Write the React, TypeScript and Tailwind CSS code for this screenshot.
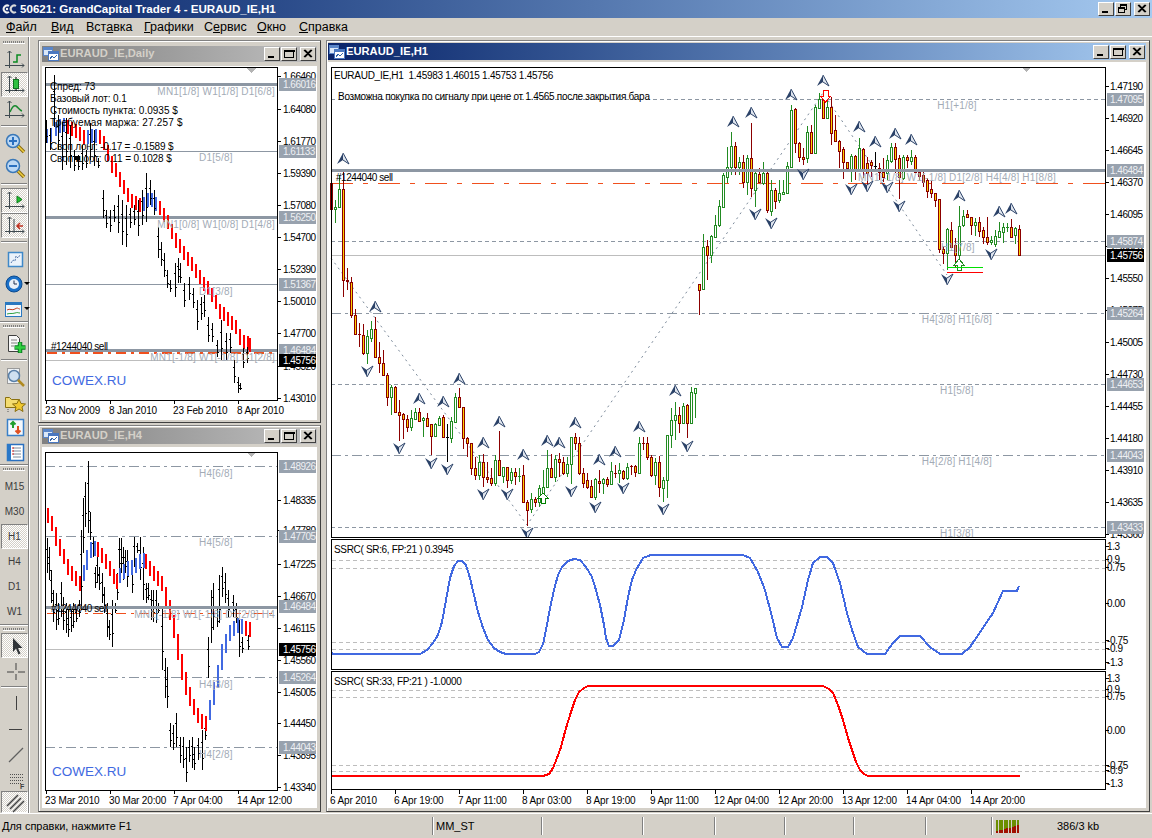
import type { ReactNode } from 'react';

const FONT = '"Liberation Sans", Arial, sans-serif';
const LEVEL = '#8d97a3';
const LABEL = '#a3abb6';

type Candle = [number, number, number, number, string];

const candles: Candle[] = [
  [183,209,177,213,'r'],[207,209,200,223,'g'],[189,207,175,207,'g'],[189,280,172,297,'r'],[280,281,268,290,'r'],[282,315,277,318,'r'],
  [315,334,309,334,'r'],[334,334,323,347,'r'],[335,353,324,355,'r'],[336,353,330,364,'g'],[329,338,321,342,'g'],[329,357,317,358,'r'],
  [357,363,342,373,'r'],[363,375,350,376,'r'],[375,397,373,406,'r'],[387,397,385,415,'g'],[387,412,386,413,'r'],[412,415,400,441,'r'],
  [414,419,413,439,'r'],[419,427,415,432,'r'],[418,427,410,431,'g'],[412,419,408,420,'g'],[412,421,408,422,'r'],[418,420,417,437,'g'],
  [418,426,413,427,'r'],[424,436,424,455,'r'],[424,436,423,437,'g'],[418,425,416,426,'g'],[417,437,415,438,'r'],[437,437,424,462,'k'],
  [421,438,417,443,'g'],[397,422,393,423,'g'],[397,407,388,408,'r'],[407,438,407,449,'r'],[438,443,437,457,'r'],[443,468,443,475,'r'],
  [468,475,457,480,'r'],[462,475,455,480,'g'],[462,477,454,487,'r'],[477,479,462,483,'r'],[478,483,468,486,'r'],[460,483,455,486,'g'],
  [460,475,431,475,'r'],[467,476,467,483,'g'],[467,480,467,488,'r'],[472,480,468,484,'g'],[472,476,468,485,'r'],[476,476,468,482,'g'],
  [475,502,465,503,'r'],[502,510,500,526,'r'],[499,509,493,513,'g'],[499,502,497,507,'r'],[488,502,485,507,'g'],[487,498,470,504,'g'],
  [468,487,450,488,'g'],[468,477,454,478,'r'],[459,477,455,482,'g'],[459,462,453,477,'r'],[462,473,457,475,'r'],[464,473,457,477,'g'],
  [437,464,437,484,'g'],[437,443,433,450,'r'],[443,473,437,475,'r'],[473,483,468,488,'r'],[480,487,473,489,'r'],[486,497,480,498,'r'],
  [479,497,478,500,'g'],[481,483,470,493,'r'],[479,483,478,494,'g'],[479,484,477,487,'r'],[471,484,462,485,'g'],[473,473,465,478,'r'],
  [470,473,463,483,'g'],[471,478,470,480,'r'],[467,478,463,480,'g'],[466,466,465,475,'r'],[466,472,465,477,'r'],[443,473,437,473,'g'],
  [443,443,437,450,'r'],[443,457,437,460,'r'],[457,475,455,477,'r'],[462,475,458,485,'g'],[462,487,456,497,'r'],[480,488,477,502,'g'],
  [435,480,435,498,'g'],[420,435,408,448,'g'],[415,420,402,440,'g'],[415,423,407,433,'r'],[406,423,403,423,'g'],[405,423,404,438,'r'],
  [392,423,387,423,'g'],[388,393,388,418,'g'],[284,290,284,315,'r'],[247,289,234,290,'g'],[246,255,240,280,'r'],[236,255,235,263,'g'],
  [225,237,215,238,'g'],[206,225,200,227,'g'],[175,207,173,207,'g'],[167,177,147,183,'g'],[146,167,132,175,'g'],[146,167,142,175,'r'],
  [162,167,157,175,'g'],[162,182,155,188,'r'],[158,182,155,195,'g'],[158,188,123,197,'r'],[173,190,170,207,'g'],[174,182,168,183,'r'],
  [173,183,162,185,'g'],[173,210,172,213,'r'],[190,211,180,216,'g'],[190,201,188,209,'r'],[193,200,180,203,'g'],[192,194,180,195,'g'],
  [166,193,162,193,'g'],[110,167,105,168,'g'],[109,143,108,153,'r'],[143,157,142,162,'r'],[157,159,148,165,'r'],[132,158,126,163,'g'],
  [132,153,125,153,'r'],[107,153,105,153,'g'],[99,108,93,108,'g'],[99,118,90,119,'r'],[107,118,97,118,'g'],[107,133,97,145,'r'],
  [130,141,115,142,'r'],[141,151,140,168,'r'],[149,162,147,179,'r'],[162,168,162,170,'r'],[156,169,154,182,'g'],[156,169,155,180,'r'],
  [148,169,138,170,'g'],[149,169,148,178,'r'],[163,173,157,187,'r'],[162,165,160,177,'r'],[166,166,152,170,'k'],[168,172,163,180,'r'],
  [172,177,158,182,'r'],[160,173,155,180,'g'],[147,161,143,163,'g'],[147,159,143,173,'r'],[158,177,155,199,'r'],[157,178,155,180,'g'],
  [157,160,155,168,'r'],[157,161,150,165,'g'],[157,172,155,173,'r'],[172,176,170,180,'r'],[175,182,170,187,'r'],[180,191,178,198,'r'],
  [189,193,180,198,'r'],[193,200,193,207,'r'],[199,249,199,253,'r'],[249,253,246,264,'r'],[229,253,228,270,'g'],[230,247,222,247,'r'],
  [245,255,238,267,'r'],[226,255,206,260,'g'],[216,225,210,227,'g'],[214,217,210,218,'r'],[217,225,217,235,'r'],[222,225,218,236,'g'],
  [222,231,217,237,'r'],[230,237,227,244,'r'],[237,242,217,245,'r'],[240,242,236,245,'g'],[236,244,230,247,'g'],[231,237,222,237,'g'],
  [227,232,223,243,'g'],[227,227,223,232,'g'],[227,237,219,238,'r'],[228,235,227,244,'g'],[229,255,225,255,'r'],
];

const upMarks = [[343,159],[733,122],[751,113],[791,95],[823,81],[859,127],[875,142],[895,134],[911,140],[959,196],[999,212],[1011,209],[375,307],[459,379],[419,399],[443,402],[499,422],[483,443],[523,455],[547,441],[559,443],[575,423],[599,460],[615,452],[639,427],[675,391]];
const downMarks = [[367,371],[399,448],[431,463],[447,469],[483,494],[507,494],[527,533],[571,491],[595,507],[623,488],[663,509],[687,446],[755,214],[771,223],[803,174],[851,189],[867,186],[887,187],[899,206],[947,279],[991,254]];

const blueLine = '331,653 334,654 420,654 427,650 433,643 438,635 442,622 446,600 450,578 454,566 458,561 462,561 466,565 470,578 474,595 478,612 483,628 488,640 494,648 500,652 506,654 535,654 539,652 543,644 546,630 550,608 554,590 558,575 562,567 568,561 574,559 580,560 586,567 592,577 596,590 600,605 604,625 606,638 609,646 613,646 619,640 624,620 628,597 632,580 636,570 643,558 651,555 743,555 750,558 758,572 765,590 772,617 777,638 782,647 788,647 793,638 802,607 808,580 813,563 820,557 827,557 833,563 840,583 847,613 852,630 858,647 867,654 885,654 893,643 900,636 920,636 930,647 940,654 962,654 970,647 993,613 1003,591 1017,591 1019,586';
const redLine = '331,776 543,776 549,774 553,768 557,758 561,747 566,728 571,712 575,700 579,692 584,688 588,686 823,686 829,689 833,693 838,705 843,720 848,738 852,750 856,762 860,770 864,774 868,776 1020,776';

const dailyBand: [number, number][] = [[46,136],[50,135],[55,129],[59,126],[63,125],[67,127],[71,129],[75,131],[79,134],[83,137],[87,137],[91,136],[95,136],[99,137],[103,143],[107,153],[111,164],[115,170],[119,179],[123,187],[127,195],[131,201],[135,203],[139,205],[143,204],[147,200],[151,200],[155,204],[159,208],[163,215],[167,222],[171,231],[175,240],[179,246],[183,253],[187,259],[191,264],[195,271],[199,277],[203,284],[207,288],[211,295],[215,302],[219,311],[223,314],[227,319],[231,323],[235,327],[239,337],[243,342],[247,343],[249,345]];
const dailyBlue: [number, number][] = [[46,66],[87,97],[143,157]];

const dailyBars: [number, number, number][] = [[46,120,143],[50,128,150],[54,75,127],[58,115,150],[62,122,170],[66,118,165],[70,125,168],[74,150,171],[78,155,170],[82,145,170],[86,150,168],[90,123,160],[94,130,166],[98,158,168],[103,190,218],[106,210,228],[110,210,232],[114,205,222],[118,195,233],[122,200,245],[126,205,247],[130,208,228],[134,205,225],[138,200,236],[142,190,225],[146,173,222],[150,180,205],[154,190,215],[158,227,258],[161,242,266],[164,253,277],[167,270,288],[170,280,292],[175,263,297],[178,258,283],[180,263,283],[184,283,307],[189,277,300],[193,288,308],[197,300,330],[201,297,320],[204,295,317],[208,317,342],[212,323,342],[217,340,357],[221,320,360],[226,333,360],[230,333,353],[234,360,383],[238,377,393],[240,383,390],[243,348,368],[247,347,363]];

// zoom coordinates of the H4 pane: x = X / 3, y = 440 + Y / 3
const h4BandRaw: [number, number][] = [[140,225],[152,250],[164,290],[176,322],[188,350],[200,380],[212,400],[224,415],[236,430],[248,400],[258,360],[270,330],[282,325],[292,328],[304,345],[316,365],[328,385],[340,410],[348,425],[356,405],[368,395],[380,385],[392,382],[404,375],[416,365],[428,360],[436,365],[448,385],[460,400],[472,415],[484,430],[496,470],[508,510],[520,560],[532,620],[544,680],[556,730],[568,770],[580,800],[592,825],[604,845],[616,850],[628,810],[640,760],[652,710],[664,650],[676,610],[688,580],[700,565],[712,555],[724,560],[736,565],[746,568]];
const h4Band = h4BandRaw.map(([x, y]): [number, number] => [Math.round(x / 3), 440 + y / 3]);
const h4Blue: [number, number][] = [[82,95],[118,143],[209,242]];

const h4BarsRaw: [number, number, number][] = [[140,295,400],[146,320,420],[152,390,490],[160,450,545],[167,460,570],[175,490,555],[182,425,530],[190,470,570],[197,490,580],[205,510,590],[213,510,575],[220,490,565],[228,500,545],[236,480,530],[242,270,510],[248,175,340],[256,125,260],[265,62,280],[271,215,300],[278,290,350],[284,380,445],[290,350,430],[298,380,450],[305,400,490],[313,440,520],[320,490,590],[326,540,600],[335,480,620],[344,490,520],[350,400,480],[356,295,400],[362,295,400],[368,320,420],[375,330,400],[382,330,440],[395,370,460],[403,290,380],[410,310,340],[420,290,420],[430,320,480],[437,430,490],[445,430,480],[452,450,540],[460,450,545],[468,450,550],[475,490,520],[487,500,690],[494,655,775],[500,680,805],[510,850,920],[520,855,930],[528,820,920],[540,890,970],[548,890,985],[558,920,1025],[568,900,965],[575,890,985],[583,920,990],[595,895,960],[607,870,990],[616,850,900],[625,590,715],[633,450,610],[640,430,570],[650,500,560],[656,405,550],[667,380,470],[675,400,490],[685,450,530],[698,465,530],[708,490,550],[716,540,650],[725,590,640],[745,585,630]];
const h4Bars = h4BarsRaw.map(([x, t, b]): [number, number, number] => [Math.round(x / 3), 440 + Math.round(t / 3), 440 + Math.round(b / 3)]);

function T({ x, y, children, fill = '#000', anchor, size = 10, ls = -0.27 }: { x: number; y: number; children: ReactNode; fill?: string; anchor?: 'end' | 'middle'; size?: number; ls?: number }) {
  return (
    <text x={x} y={y + 4} fill={fill} textAnchor={anchor} fontSize={size} letterSpacing={ls} fontFamily={FONT} shapeRendering="auto">
      {children}
    </text>
  );
}

function G({ x, y, anchor, children }: { x: number; y: number; anchor?: 'end' | 'middle'; children: ReactNode }) {
  return <T x={x} y={y} anchor={anchor} fill={LABEL} ls={0.2}>{children}</T>;
}

function Level({ x1, x2, y, dash, color = LEVEL, w = 1 }: { x1: number; x2: number; y: number; dash?: string; color?: string; w?: number }) {
  return <line x1={x1} x2={x2} y1={y} y2={y} stroke={color} strokeWidth={w} strokeDasharray={dash} />;
}

function PriceAxis({ x, dx = 6, ticks, tags, bid }: { x: number; dx?: number; ticks: [string, number][]; tags: [string, number][]; bid: [string, number] }) {
  return (
    <>
      {ticks.map(([t, y]) => (
        <g key={t}>
          <line x1={x} x2={x + 4} y1={y} y2={y} stroke="#000" />
          <T x={x + dx} y={y} ls={-0.5}>{t}</T>
        </g>
      ))}
      {tags.map(([t, y]) => (
        <g key={t}>
          <rect x={x + 2} y={y - 6} width={37} height={13} fill="#98a2ae" />
          <T x={x + dx} y={y} fill="#eef0f3" ls={-0.5}>{t}</T>
        </g>
      ))}
      <rect x={x + 2} y={bid[1] - 6} width={37} height={13} fill="#000" />
      <T x={x + dx} y={bid[1]} fill="#fff" ls={-0.5}>{bid[0]}</T>
    </>
  );
}

function TimeAxis({ x, y, labels }: { x: number; y: number; labels: string[] }) {
  return (
    <>
      {labels.map((t, i) => (
        <g key={t}>
          <line x1={x + i * 64} x2={x + i * 64} y1={y} y2={y + 4} stroke="#000" />
          <T x={x + i * 64 - 1} y={y + 10} ls={-0.15}>{t}</T>
        </g>
      ))}
    </>
  );
}

function Band({ data, blue, min }: { data: [number, number][]; blue: [number, number][]; min: number }) {
  return (
    <>
      {data.map(([x, y], i) => {
        const prev = data[Math.max(i - 1, 0)][1];
        const h = Math.max(min, Math.abs(y - prev) + 6);
        const isBlue = blue.some(([a, b]) => x >= a && x <= b);
        return <rect key={x} x={x} y={y - h / 2} width={2} height={h} fill={isBlue ? '#4169e1' : '#ff0000'} />;
      })}
    </>
  );
}

// open tick to the left, close tick to the right of every bar
function Bars({ data }: { data: [number, number, number][] }) {
  return (
    <>
      {data.map(([x, t, b]) => (
        <g key={`${x}-${t}`}>
          <rect x={x} y={t} width={1} height={b - t} fill="#000" />
          <rect x={x - 1} y={t + Math.round((b - t) * 0.3)} width={1} height={1} fill="#000" />
          <rect x={x + 1} y={t + Math.round((b - t) * 0.7)} width={1} height={1} fill="#000" />
        </g>
      ))}
    </>
  );
}

function Cowex({ y }: { y: number }) {
  return <T x={52} y={y} fill="#4169e1" size={13.5} ls={0}>COWEX.RU</T>;
}

function Marker({ x, y }: { x: number; y: number }) {
  return <polygon points={`${x - 5},${y} ${x + 5},${y} ${x},${y + 5}`} fill="#b4b4b4" />;
}

function Fractal({ x, y, up }: { x: number; y: number; up: boolean }) {
  const s = up ? 1 : -1;
  return (
    <g shapeRendering="auto">
      <polygon points={`${x},${y - 6 * s} ${x - 6},${y + 5 * s} ${x},${y + 1 * s}`} fill="#2b4268" />
      <polyline points={`${x},${y - 6 * s} ${x + 6},${y + 5 * s} ${x},${y + 1 * s}`} fill="#dfe5ee" stroke="#2b4268" strokeWidth={1} />
    </g>
  );
}

function DailyChart() {
  const ticks: [string, number][] = [['1.66460',76],['1.64080',109],['1.61770',141],['1.59390',173],['1.57080',205],['1.54700',237],['1.52390',269],['1.50010',301],['1.47700',333],['1.45320',366],['1.43010',398]];
  const tags: [string, number][] = [['1.66016',84],['1.61133',151],['1.56250',217],['1.51367',284],['1.46484',350]];
  return (
    <svg width={275} height={354} viewBox="42 66 275 354" shapeRendering="crispEdges" className="block">
      <Level x1={45} x2={277} y={84.5} w={3} />
      <Level x1={45} x2={277} y={151.5} />
      <Level x1={45} x2={277} y={217.5} w={3} />
      <Level x1={45} x2={277} y={284.5} />
      <Level x1={45} x2={277} y={360.5} color="#bdbdbd" />
      <Level x1={47} x2={277} y={352.5} w={2} color="#f0501e" dash="10 5 3 5" />
      <Level x1={45} x2={277} y={350.5} w={3} />
      <Band data={dailyBand} blue={dailyBlue} min={14} />
      <Bars data={dailyBars} />
      <rect x={74} y={156} width={6} height={4} fill="#000" />
      <G x={275} y={91} anchor="end">MN1[1/8] W1[1/8] D1[6/8]</G>
      <G x={199} y={157}>D1[5/8]</G>
      <G x={275} y={224} anchor="end">MN1[0/8] W1[0/8] D1[4/8]</G>
      <G x={199} y={291}>D1[3/8]</G>
      <G x={275} y={357} anchor="end">MN1[-1/8] W1[-1/8] D1[2/8]</G>
      <T x={51} y={346} ls={-0.45}>#1244040 sell</T>
      <T x={50} y={86} ls={-0.1}>Спред: 73</T>
      <T x={50} y={98} ls={-0.1}>Базовый лот: 0.1</T>
      <T x={50} y={110} ls={0}>Стоимость пункта: 0.0935 $</T>
      <T x={50} y={122} ls={0.2}>Требуемая маржа: 27.257 $</T>
      <T x={50} y={146} ls={-0.2}>Своп лонг: -0.17 = -0.1589 $</T>
      <T x={50} y={158} ls={-0.1}>Своп шорт: 0.11 = 0.1028 $</T>
      <Cowex y={381} />
      <Marker x={251} y={68} />
      <rect x={45.5} y={67.5} width={232} height={333} fill="none" stroke="#000" />
      <PriceAxis x={277} ticks={ticks} tags={tags} bid={['1.45756', 360]} />
      <TimeAxis x={46} y={400} labels={['23 Nov 2009', '8 Jan 2010', '23 Feb 2010', '8 Apr 2010']} />
    </svg>
  );
}

function H4Chart() {
  const ticks: [string, number][] = [['1.48335',500],['1.47780',530],['1.47225',564],['1.46670',596],['1.46115',628],['1.45560',660],['1.45005',692],['1.44450',723],['1.43895',755],['1.43340',787]];
  const tags: [string, number][] = [['1.48926',466],['1.47705',536],['1.46484',606],['1.45264',677],['1.44043',747]];
  const dash = '10 4 3 4';
  return (
    <svg width={275} height={361} viewBox="42 447 275 361" shapeRendering="crispEdges" className="block">
      <Level x1={45} x2={277} y={466.5} dash={dash} />
      <Level x1={45} x2={277} y={536.5} dash={dash} />
      <Level x1={45} x2={277} y={649.5} color="#bdbdbd" />
      <Level x1={45} x2={277} y={677.5} dash={dash} />
      <Level x1={45} x2={277} y={747.5} dash={dash} />
      <Level x1={47} x2={277} y={613.5} color="#f0501e" dash="10 5 3 5" />
      <Bars data={h4Bars} />
      <Band data={h4Band} blue={h4Blue} min={15} />
      <Level x1={45} x2={277} y={607} w={3} />
      <G x={199} y={473}>H4[6/8]</G>
      <G x={199} y={542}>H4[5/8]</G>
      <G x={275} y={614} anchor="end">MN1[-1/8] W1[-1/8] D1[2/8] H4</G>
      <G x={199} y={684}>H4[3/8]</G>
      <G x={199} y={754}>H4[2/8]</G>
      <T x={51} y={608} ls={-0.45}>#1244040 sell</T>
      <Cowex y={772} />
      <Marker x={251} y={452} />
      <rect x={45.5} y={452.5} width={232} height={338} fill="none" stroke="#000" />
      <PriceAxis x={277} ticks={ticks} tags={tags} bid={['1.45756', 649]} />
      <TimeAxis x={46} y={790} labels={['23 Mar 2010', '30 Mar 20:00', '7 Apr 04:00', '14 Apr 12:00']} />
    </svg>
  );
}

function Candles() {
  return (
    <>
      {candles.map(([t, b, wt, wb, c], i) => {
        const x = 331 + i * 4;
        const edge = c === 'r' ? '#8b0000' : c === 'g' ? '#228b22' : '#000';
        return (
          <g key={i}>
            <rect x={x} y={wt} width={1} height={wb - wt} fill={edge} />
            <rect x={x - 1} y={t} width={3} height={Math.max(b - t, 0) + 1} fill={edge} />
            {b - t > 1 && <rect x={x} y={t + 1} width={1} height={b - t - 1} fill={c === 'r' ? '#ffd000' : '#fff'} />}
          </g>
        );
      })}
    </>
  );
}

function MainChart() {
  const ticks: [string, number][] = [['1.47190',86],['1.46920',118],['1.46645',150],['1.46370',182],['1.46095',214],['1.45825',246],['1.45550',278],['1.45275',310],['1.45005',342],['1.44730',374],['1.44455',406],['1.44180',438],['1.43910',470],['1.43635',502],['1.43360',534]];
  const tags: [string, number][] = [['1.47095',99],['1.46484',170],['1.45874',241],['1.45264',313],['1.44653',384],['1.44043',455],['1.43433',527]];
  const dashed = '4 3';
  const dashDot = '10 4 3 4';
  return (
    <svg width={818} height={746} viewBox="328 62 818 746" shapeRendering="crispEdges" className="block">
      <Level x1={331} x2={1105} y={99.5} dash={dashed} />
      <Level x1={331} x2={1105} y={241.5} dash={dashed} />
      <Level x1={331} x2={1105} y={255.5} color="#bdbdbd" />
      <Level x1={331} x2={1105} y={313.5} dash={dashDot} />
      <Level x1={331} x2={1105} y={384.5} dash={dashed} />
      <Level x1={331} x2={1105} y={455.5} dash={dashDot} />
      <Level x1={331} x2={1105} y={527.5} dash={dashed} />
      <Level x1={331} x2={1105} y={183.5} color="#f0501e" dash="22 10 5 10" />
      <polyline points="331,258 527,525 823,93 947,275" fill="none" stroke="#7c8a9a" strokeDasharray="2 4" shapeRendering="auto" />
      <Candles />
      <Level x1={331} x2={1105} y={170.5} w={3} />
      {upMarks.map(([x, y]) => <Fractal key={`${x}u`} x={x} y={y} up />)}
      {downMarks.map(([x, y]) => <Fractal key={`${x}d`} x={x} y={y} up={false} />)}
      <path d="M823 90h5v6h3l-5.500 6l-5.500-6h3z" fill="#fff" stroke="#ff0000" />
      <path d="M957 270v-5h-3l5-6l5 6h-3v5z" fill="#fff" stroke="#228b22" />
      <path d="M541 503v-5h-3l5-5l5 5h-3v5z" fill="#fff" stroke="#008000" />
      <line x1={947} x2={983} y1={267.5} y2={267.5} stroke="#00e000" />
      <line x1={947} x2={983} y1={272.5} y2={272.5} stroke="#ff0000" />
      <G x={957} y={105} anchor="middle">H1[+1/8]</G>
      <G x={1056} y={177} anchor="end">MN1[-1/8] W1[-1/8] D1[2/8] H4[4/8] H1[8/8]</G>
      <G x={941} y={247}>H1[7/8]</G>
      <G x={992} y={319} anchor="end">H4[3/8] H1[6/8]</G>
      <G x={940} y={390}>H1[5/8]</G>
      <G x={992} y={461} anchor="end">H4[2/8] H1[4/8]</G>
      <G x={940} y={533}>H1[3/8]</G>
      <T x={336} y={177} ls={-0.45}>#1244040 sell</T>
      <T x={334} y={75}>EURAUD_IE,H1&nbsp;&nbsp;1.45983 1.46015 1.45753 1.45756</T>
      <T x={338} y={96}>Возможна покупка по сигналу при цене от 1.4565 после закрытия бара</T>
      <Marker x={1026} y={67} />
      <rect x={331} y={538} width={775} height={2} fill="#fff" />
      <rect x={331.5} y={67.5} width={774} height={470} fill="none" stroke="#000" />
      <PriceAxis x={1105} dx={5} ticks={ticks} tags={tags} bid={['1.45756', 255]} />

      {[560.5, 568.5, 642.5, 649.5].map((y) => <Level key={y} x1={332} x2={1105} y={y} color="#bdbdbd" dash="4 3" />)}
      <polyline points={blueLine} fill="none" stroke="#4169e1" strokeWidth={2} />
      <T x={334} y={549} ls={-0.33}>SSRC( SR:6, FP:21 ) 0.3945</T>
      <rect x={331.5} y={539.5} width={774} height={130} fill="none" stroke="#000" />
      {([['1.3',546],['0.9',559],['0.75',567],['0.00',603],['-0.75',640],['-0.9',648],['-1.3',662]] as [string, number][]).map(([t, y]) => (
        <g key={t}>
          <line x1={1105} x2={1109} y1={y} y2={y} stroke="#000" />
          <T x={1107} y={y} ls={-0.4}>{t}</T>
        </g>
      ))}

      {[690.5, 697.5, 765.5, 771.5].map((y) => <Level key={y} x1={332} x2={1105} y={y} color="#bdbdbd" dash="4 3" />)}
      <polyline points={redLine} fill="none" stroke="#ff0000" strokeWidth={2} />
      <T x={334} y={681} ls={-0.33}>SSRC( SR:33, FP:21 ) -1.0000</T>
      <rect x={331.5} y={671.5} width={774} height={118} fill="none" stroke="#000" />
      {([['1.3',678],['0.9',689],['0.75',696],['0.00',730],['-0.75',765],['-0.9',770],['-1.3',783]] as [string, number][]).map(([t, y]) => (
        <g key={t}>
          <line x1={1105} x2={1109} y1={y} y2={y} stroke="#000" />
          <T x={1107} y={y} ls={-0.4}>{t}</T>
        </g>
      ))}
      <TimeAxis x={331} y={790} labels={['6 Apr 2010', '6 Apr 19:00', '7 Apr 11:00', '8 Apr 03:00', '8 Apr 19:00', '9 Apr 11:00', '12 Apr 04:00', '12 Apr 20:00', '13 Apr 12:00', '14 Apr 04:00', '14 Apr 20:00']} />
    </svg>
  );
}

function WinButton({ kind }: { kind: 'min' | 'max' | 'restore' | 'close' }) {
  return (
    <div className="w-[16px] h-[14px] bg-[#d4d0c8] border border-t-white border-l-white border-r-[#404040] border-b-[#404040] flex items-center justify-center">
      <svg width={12} height={10} viewBox="0 0 12 10" shapeRendering="crispEdges">
        {kind === 'min' && <rect x={2} y={7} width={6} height={2} fill="#000" />}
        {kind === 'max' && <path d="M1.500 1.500h9v7h-9z M1 1h10v1h-10z" fill="none" stroke="#000" />}
        {kind === 'restore' && <path d="M3.500 2.500v-2h6v5h-2 M1.500 3.500h6v5h-6z M3 1h7 M2 4h6" fill="none" stroke="#000" />}
        {kind === 'close' && <path d="M2 1l7 7M3 1l7 7M9 1l-7 7M10 1l-7 7" stroke="#000" fill="none" shapeRendering="auto" strokeWidth={1.1} />}
      </svg>
    </div>
  );
}

function ChildIcon() {
  return (
    <svg width={16} height={14} viewBox="0 0 16 14" shapeRendering="crispEdges" className="shrink-0">
      <rect x={0.5} y={0.5} width={9} height={8} fill="#dbe8f8" stroke="#5b86c8" />
      <rect x={0.5} y={0.5} width={9} height={2} fill="#5b86c8" />
      <rect x={5.5} y={4.5} width={10} height={9} fill="#fff" stroke="#4a78c0" />
      <rect x={5.5} y={4.5} width={10} height={2} fill="#4a78c0" />
      <path d="M7 12l2-3 2 2 3-3" stroke="#3366aa" fill="none" />
    </svg>
  );
}

function ChildWindow({ title, active, outer, bar, children }: { title: string; active?: boolean; outer: string; bar: string; children: ReactNode }) {
  return (
    <div className={`${outer} flex flex-col bg-[#d4d0c8] border border-t-[#808080] border-l-[#808080] border-r-[#404040] border-b-[#404040] shadow-[inset_1px_1px_0_#fff]`}>
      <div className={`${bar} flex items-center justify-between pl-[1px] pr-[1px] shrink-0 ${active ? 'bg-gradient-to-r from-[#0a246a] to-[#a6caf0] text-white' : 'bg-gradient-to-r from-[#808080] to-[#c0c0c0] text-[#d4d0c8]'}`}>
        <div className="flex items-center gap-[1px]">
          <ChildIcon />
          <span className="text-[11.200px] leading-none font-bold">{title}</span>
        </div>
        <div className="flex items-center gap-[1px]">
          <WinButton kind="min" />
          <WinButton kind="max" />
          <div className="w-[1px]" />
          <WinButton kind="close" />
        </div>
      </div>
      <div className="bg-white">{children}</div>
    </div>
  );
}

function Grip({ tight }: { tight?: boolean }) {
  return <div className={`h-[3px] mx-[3px] mt-[2px] ${tight ? 'mb-[2px]' : 'mb-[3px]'} bg-[repeating-linear-gradient(90deg,#808080_0,#808080_1px,transparent_1px,transparent_2px)] border-b border-white shrink-0`} />;
}

function Sep() {
  return <div className="h-[2px] mx-[1px] my-[3px] bg-[#808080] border-b border-white shrink-0" />;
}

function Boundary() {
  return <div className="h-[2px] bg-white border-t border-[#808080] shrink-0" />;
}

function Tool({ children, pressed, arrow, short }: { children: ReactNode; pressed?: boolean; arrow?: boolean; short?: boolean }) {
  return (
    <div className={`relative w-[27px] ${short ? 'h-[22px]' : 'h-[25px]'} ml-[1px] flex items-center justify-center shrink-0 ${pressed ? 'border border-t-[#808080] border-l-[#808080] border-r-white border-b-white bg-[repeating-conic-gradient(#fff_0_25%,#d4d0c8_0_50%)] bg-[length:2px_2px]' : ''}`}>
      {children}
      {arrow && <div className="absolute left-[23px] top-[11px] w-0 h-0 border-x-[3px] border-x-transparent border-t-[3px] border-t-black" />}
    </div>
  );
}

function Ico({ children }: { children: ReactNode }) {
  return <svg width={22} height={22} viewBox="0 0 22 22" fill="none">{children}</svg>;
}

const AXES = <path d="M5.500 2v17M1 16.500h19M3.500 4l2-2 2 2M18 14.500l2 2-2 2" stroke="#3f4a50" />;

function Loupe({ sign }: { sign?: '+' | '-' }) {
  return (
    <Ico>
      <path d="M13 13l7 7" stroke="#8a6a10" strokeWidth={3.500} />
      <path d="M13 13l7 7" stroke="#f0d040" strokeWidth={1.500} />
      <circle cx={9} cy={9} r={6.500} fill="#bcd8f4" stroke="#3a78b8" strokeWidth={1.500} />
      {sign && <path d={sign === '+' ? 'M5 9h8M9 5v8' : 'M5 9h8'} stroke="#2a70c0" strokeWidth={2} />}
    </Ico>
  );
}

function TfLabel({ children }: { children: string }) {
  return <span className="text-[10px] leading-none text-[#3c3c3c]">{children}</span>;
}

function Toolbar() {
  return (
    <div className="w-[29px] shrink-0 flex flex-col border-r border-[#808080] pt-[2px]">
      <Grip />
      <Tool><Ico>{AXES}<path d="M9 13h4V6h4" stroke="#0a8a20" strokeWidth={1.500} /></Ico></Tool>
      <Tool pressed><Ico>{AXES}<path d="M12 3v14" stroke="#000" /><rect x={9.500} y={5.500} width={5} height={9} fill="#30c040" stroke="#107020" /></Ico></Tool>
      <Tool><Ico>{AXES}<path d="M6 13c2-5 4-7 6-6s3 4 6 5" stroke="#1a8a30" strokeWidth={1.500} /></Ico></Tool>
      <Sep />
      <Tool><Loupe sign="+" /></Tool>
      <Tool><Loupe sign="-" /></Tool>
      <Sep />
      <Tool pressed><Ico>{AXES}<path d="M13 6v7l5-3.500z" fill="#20c030" stroke="#0a7a18" /></Ico></Tool>
      <Tool pressed><Ico>{AXES}<path d="M10 4v14" stroke="#3f4a50" /><path d="M13 11h6M16 8l-3 3 3 3" stroke="#c03020" strokeWidth={1.500} /></Ico></Tool>
      <Sep />
      <Tool><Ico><rect x={4.500} y={4.500} width={14} height={14} fill="#eaf2fb" stroke="#3f88c8" strokeWidth={1.500} /><path d="M7 15l2-3 2 1 1-5 2 2 2-3" stroke="#5577aa" strokeDasharray="2 1" /></Ico></Tool>
      <Tool arrow><Ico><circle cx={10} cy={11} r={8} fill="#1a70c8" stroke="#0a4a90" /><circle cx={10} cy={11} r={5} fill="#e8f0f8" /><path d="M10 7.500V11h3" stroke="#203050" /></Ico></Tool>
      <Tool arrow><Ico><rect x={1.500} y={4.500} width={16} height={14} fill="#f4f8fc" stroke="#2a78c0" /><rect x={1.500} y={4.500} width={16} height={2.500} fill="#2a78c0" /><path d="M3 12c3-2 5 1 8-1s3 0 5 0" stroke="#c04020" /><path d="M3 16c3-1 5 0 8-1s3 0 5 0" stroke="#30a040" /></Ico></Tool>
      <Boundary />
      <Grip />
      <Tool><Ico><path d="M4.500 2.500h8l3 3v13h-11z" fill="#f8f8f8" stroke="#404040" /><path d="M7 7h6M7 10h6M7 13h3" stroke="#808080" /><path d="M16 9v11M10.500 14.500h11" stroke="#087a20" strokeWidth={4.500} /><path d="M16 9.500v10M11 14.500h10" stroke="#30d040" strokeWidth={2.500} /></Ico></Tool>
      <Sep />
      <Tool><Ico><rect x={3.500} y={2.500} width={12} height={15} fill="#eef2f6" stroke="#9a9a9a" /><circle cx={10} cy={10} r={5.500} fill="#cfe0f0" stroke="#5a80a8" strokeWidth={1.500} /><path d="M14 14l6 6" stroke="#b08a20" strokeWidth={2.500} /></Ico></Tool>
      <Tool><Ico><path d="M1.500 6.500h4l2 2h7v8h-13z" fill="#f4dc70" stroke="#8a7010" /><path d="M15 8l2 4.500 4.500.500-3.500 3 1 4.500-4-2.500-4 2.500 1-4.500-3.500-3 4.500-.500z" fill="#f0c830" stroke="#8a7010" /><path d="M4 18v4" stroke="#555" strokeDasharray="1 1" /></Ico></Tool>
      <Tool><Ico><rect x={3.500} y={3.500} width={16} height={16} fill="#f4f8fc" stroke="#3a80c8" strokeWidth={1.500} /><path d="M9 12V6M6.500 8.500L9 6l2.500 2.500" stroke="#20a030" strokeWidth={2} /><path d="M14 10v7M11.500 14.500L14 17l2.500-2.500" stroke="#e05020" strokeWidth={2} /></Ico></Tool>
      <Tool><Ico><rect x={3.500} y={3.500} width={16} height={16} fill="#fff" stroke="#2a70c0" strokeWidth={1.500} /><rect x={3} y={3} width={4} height={17} fill="#2a78c8" /><path d="M9 7h8M9 10h8M9 13h8M9 16h8" stroke="#7a8a9a" /><path d="M8 7h2M8 10h2M8 13h2" stroke="#d02020" /></Ico></Tool>
      <Boundary />
      <Grip />
      <Tool><TfLabel>M15</TfLabel></Tool>
      <Tool><TfLabel>M30</TfLabel></Tool>
      <Tool pressed><TfLabel>H1</TfLabel></Tool>
      <Tool><TfLabel>H4</TfLabel></Tool>
      <Tool><TfLabel>D1</TfLabel></Tool>
      <Tool><TfLabel>W1</TfLabel></Tool>
      <Boundary />
      <Grip tight />
      <Tool pressed><Ico><path d="M9 3v14l3-3.500 2.500 6 2-1-2.500-5.500h4.500z" fill="#303438" /></Ico></Tool>
      <Tool><Ico><path d="M12 3v7M12 14v6M3 12h7M14 12h7" stroke="#404040" /></Ico></Tool>
      <Sep />
      <Tool><Ico><path d="M12.500 3v14" stroke="#404040" /></Ico></Tool>
      <Tool><Ico><path d="M5 11.500h13" stroke="#404040" /></Ico></Tool>
      <Tool><Ico><path d="M5 19L19 5" stroke="#606060" strokeWidth={1.300} /></Ico></Tool>
      <Tool><Ico><path d="M6 6.500h14M6 9.500h14M6 12.500h14M6 15.500h11" stroke="#505050" strokeDasharray="1 1" /><text x={16} y={21} fontSize={7} fontWeight={700} fill="#404040" fontFamily={FONT}>F</text></Ico></Tool>
      <Tool pressed short><Ico><path d="M3 15L14 4M6 18L17 7M9 21L20 10" stroke="#404040" strokeWidth={1.500} /></Ico></Tool>
    </div>
  );
}

const menu = [
  { a: '', u: 'Ф', b: 'айл', w: 'w-[45px]' },
  { a: '', u: 'В', b: 'ид', w: 'w-[35px]' },
  { a: 'Вст', u: 'а', b: 'вка', w: 'w-[58px]' },
  { a: '', u: 'Г', b: 'рафики', w: 'w-[60px]' },
  { a: 'С', u: 'е', b: 'рвис', w: 'w-[53px]' },
  { a: '', u: 'О', b: 'кно', w: 'w-[42px]' },
  { a: '', u: 'С', b: 'правка', w: 'w-[60px]' },
];

function Conn() {
  return (
    <svg width={24} height={13} viewBox="0 0 24 13" shapeRendering="crispEdges">
      {[2, 3, 3, 4, 5, 5, 6, 7, 8].map((h, i) => (
        <g key={i}>
          <rect x={i * 2.600} y={0} width={2} height={13 - h} fill="#6b8e00" />
          <rect x={i * 2.600} y={13 - h} width={2} height={h} fill="#a01000" />
        </g>
      ))}
    </svg>
  );
}

function StatusCell({ w, children }: { w: string; children?: ReactNode }) {
  return (
    <div className={`${w} h-full flex items-center shrink-0`}>
      <div className="h-[18px] w-[2px] border-l border-[#808080] bg-white shrink-0" />
      {children}
    </div>
  );
}

export default function App() {
  return (
    <div className="w-[1152px] h-[838px] flex flex-col overflow-hidden bg-[#d4d0c8] text-[12px] text-black" style={{ fontFamily: FONT }}>
      <div className="h-[18px] shrink-0 flex items-center justify-between pl-[2px] pr-[2px] bg-gradient-to-r from-[#0a246a] to-[#a6caf0]">
        <div className="flex items-center gap-[3px]">
          <svg width={15} height={12} viewBox="0 0 15 12" fill="none">
            <path d="M7 3a3.500 3.500 0 1 0 0 6" stroke="#f0f0f0" strokeWidth={2} />
            <circle cx={5} cy={6} r={1.200} fill="#f0f0f0" />
            <path d="M14 3a3.500 3.500 0 1 0 0 6" stroke="#d8d8d8" strokeWidth={2} />
          </svg>
          <span className="text-[11.600px] leading-none font-bold text-white">50621: GrandCapital Trader 4 - EURAUD_IE,H1</span>
        </div>
        <div className="flex items-center gap-[1px]">
          <WinButton kind="min" />
          <WinButton kind="restore" />
          <div className="w-[1px]" />
          <WinButton kind="close" />
        </div>
      </div>

      <div className="h-[18px] shrink-0 flex items-center pl-[6px] text-[12.500px] leading-none">
        {menu.map((m) => (
          <div key={m.u + m.b} className={m.w}>
            {m.a}
            <u>{m.u}</u>
            {m.b}
          </div>
        ))}
      </div>

      <div className="flex-1 min-h-0 flex border-t border-white">
        <Toolbar />
        <div className="flex-1 min-w-0 flex pt-[3px] pl-[8px] border-l border-white">
          <div className="w-[283px] shrink-0 flex flex-col gap-[2px]">
            <ChildWindow title="EURAUD_IE,Daily" outer="w-[283px] h-[383px] px-[3px] pt-[5px]" bar="h-[16px] mb-[4px]">
              <DailyChart />
            </ChildWindow>
            <ChildWindow title="EURAUD_IE,H4" outer="w-[283px] h-[387px] px-[3px] pt-[2px]" bar="h-[16px] mb-[3px]">
              <H4Chart />
            </ChildWindow>
          </div>
          <div className="ml-[5px]">
            <ChildWindow title="EURAUD_IE,H1" active outer="w-[824px] h-[772px] pl-[1px] pr-[3px] pt-[2px]" bar="h-[17px] mb-[2px]">
              <MainChart />
            </ChildWindow>
          </div>
        </div>
      </div>

      <div className="h-[25px] shrink-0 flex items-center border-t border-white text-[11px]">
        <div className="w-[432px] pl-[2px] shrink-0">Для справки, нажмите F1</div>
        <StatusCell w="w-[109px]"><span className="ml-[2px]">MM_ST</span></StatusCell>
        <StatusCell w="w-[101px]" />
        <StatusCell w="w-[72px]" />
        <StatusCell w="w-[70px]" />
        <StatusCell w="w-[69px]" />
        <StatusCell w="w-[72px]" />
        <StatusCell w="w-[66px]" />
        <StatusCell w="w-[161px]">
          <div className="ml-[3px]"><Conn /></div>
          <span className="ml-[37px]">386/3 kb</span>
        </StatusCell>
      </div>
    </div>
  );
}
